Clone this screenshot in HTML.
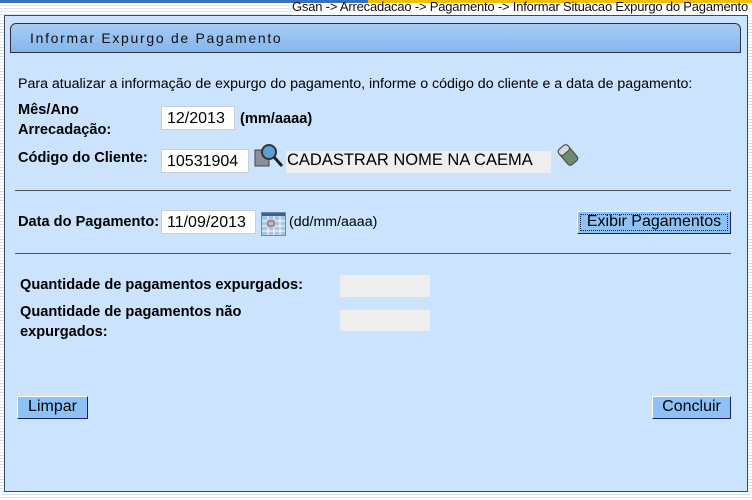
<!DOCTYPE html>
<html><head><meta charset="utf-8"><style>
*{margin:0;padding:0;box-sizing:border-box}
body{width:752px;height:500px;overflow:hidden;position:relative;font-family:"Liberation Sans",sans-serif;font-size:13px;color:#000;
background:repeating-linear-gradient(to bottom,#fff 0,#fff 2px,#d6e8f8 2px,#d6e8f8 3px)}
.a{position:absolute;white-space:nowrap}
.b{font-weight:bold;font-size:14.6px}
.inp{position:absolute;background:#fff;border:1px solid #c8d0d8;font-size:16px;padding:1px 0 0 5px;height:24px;line-height:21px}
.gray{position:absolute;background:#eeeeee}
.btn{position:absolute;background:#8ec2f6;border:1px solid;border-color:#fff #1a2060 #1a2060 #fff;font-size:16px;text-align:center;line-height:20px;height:23px}
</style></head><body>
<div class="a" style="left:0;top:0;width:752px;height:3px;background:#3a6fc0"></div>
<div class="a" style="left:368px;top:0;width:384px;height:5px;background:#f5c000"></div>
<div class="a" style="left:292px;top:3px;width:460px;height:12px;background:#fff"></div>
<div class="a" style="left:292px;top:-1px;font-size:13px;line-height:15px;color:#111;letter-spacing:-0.2px">Gsan -&gt; Arrecadacao -&gt; Pagamento -&gt; Informar Situacao Expurgo do Pagamento</div>
<div class="a" style="left:4px;top:15px;width:744px;height:477px;background:#cbe3fc;border:1px solid #3c4a5c"></div>
<div class="a" style="left:10px;top:23px;width:731px;height:30px;background:linear-gradient(#a7cdf5,#85b5ea);border:1px solid #2a3342;border-radius:6px 6px 0 0"></div>
<div class="a" style="left:30px;top:30px;font-size:14px;letter-spacing:1.7px;color:#111">Informar Expurgo de Pagamento</div>
<div class="a" style="left:18px;top:76px;font-size:14.2px">Para atualizar a informação de expurgo do pagamento, informe o código do cliente e a data de pagamento:</div>
<div class="a b" style="left:18px;top:100px;line-height:20px">Mês/Ano<br>Arrecadação:</div>
<div class="inp" style="left:161px;top:106px;width:74px">12/2013</div>
<div class="a b" style="left:240px;top:111px">(mm/aaaa)</div>
<div class="a b" style="left:18px;top:150px">Código do Cliente:</div>
<div class="inp" style="left:161px;top:149px;width:88px">10531904</div>
<svg class="a" style="left:254px;top:142px" width="30" height="28" viewBox="0 0 30 28"><rect x="1" y="8" width="14" height="16" fill="#8a9098" stroke="#444"/><circle cx="15" cy="10" r="7" fill="#5aa0d8" stroke="#333" stroke-width="2"/><line x1="20" y1="15" x2="28" y2="24" stroke="#222" stroke-width="3"/></svg>
<div class="gray" style="left:286px;top:151px;width:265px;height:22px"></div>
<div class="a" style="left:287px;top:151px;font-size:16.5px">CADASTRAR NOME NA CAEMA</div>
<svg class="a" style="left:556px;top:142px" width="24" height="26" viewBox="0 0 24 26"><g transform="rotate(-40 12 13)"><rect x="6" y="3" width="12" height="20" rx="3" fill="#6f8a70" stroke="#444"/><rect x="6" y="3" width="12" height="7" rx="3" fill="#d8d8d8" stroke="#444"/></g></svg>
<div class="a" style="left:15px;top:190px;width:716px;height:1px;background:#555"></div>
<div class="a b" style="left:18px;top:214px">Data do Pagamento:</div>
<div class="inp" style="left:161px;top:210px;width:95px">11/09/2013</div>
<svg class="a" style="left:261px;top:212px" width="25" height="24" viewBox="0 0 25 24"><rect x="0.5" y="0.5" width="24" height="23" fill="#a9c6e0" stroke="#6a8aa8"/><rect x="1" y="1" width="23" height="3" fill="#3a5ea0"/><g stroke="#fff" stroke-width="1"><line x1="1" y1="9" x2="24" y2="9"/><line x1="1" y1="14" x2="24" y2="14"/><line x1="1" y1="19" x2="24" y2="19"/><line x1="7" y1="4" x2="7" y2="23"/><line x1="13" y1="4" x2="13" y2="23"/><line x1="19" y1="4" x2="19" y2="23"/></g><rect x="7" y="9" width="6" height="5" fill="none" stroke="#c04040"/></svg>
<div class="a" style="left:289px;top:214px;font-size:14.2px">(dd/mm/aaaa)</div>
<div class="btn" style="left:577px;top:211px;width:154px;outline:1px dotted #222;outline-offset:-4px">Exibir Pagamentos</div>
<div class="a" style="left:15px;top:253px;width:716px;height:1px;background:#555"></div>
<div class="a b" style="left:20px;top:277px">Quantidade de pagamentos expurgados:</div>
<div class="gray" style="left:340px;top:275px;width:90px;height:22px"></div>
<div class="a b" style="left:20px;top:302px;line-height:20px">Quantidade de pagamentos não<br>expurgados:</div>
<div class="gray" style="left:340px;top:310px;width:90px;height:21px"></div>
<div class="btn" style="left:17px;top:396px;width:71px">Limpar</div>
<div class="btn" style="left:652px;top:396px;width:79px">Concluir</div>
</body></html>
